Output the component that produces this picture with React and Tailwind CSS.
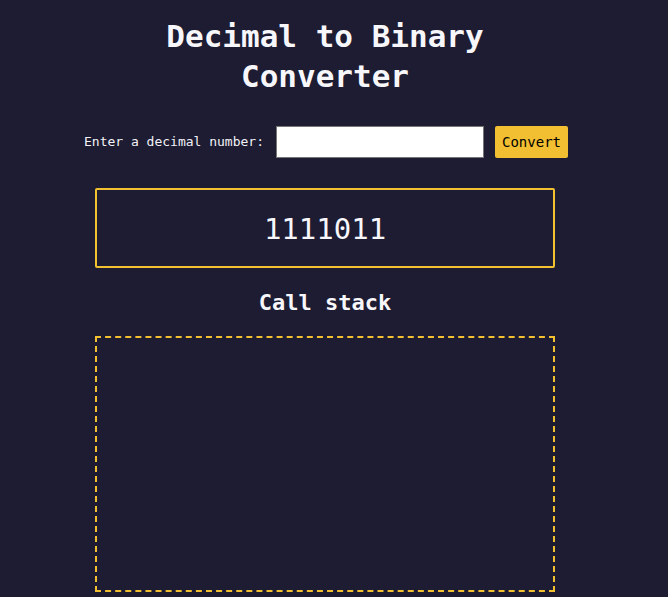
import React, { useState } from 'react';

const mono = { fontFamily: '"DejaVu Sans Mono", "Liberation Mono", monospace' };

const App = () => {
  const [value, setValue] = useState('');
  const [result, setResult] = useState('1111011');

  const convert = () => {
    const n = parseInt(value, 10);
    if (!isNaN(n)) setResult(n.toString(2));
  };

  return (
    <div className="min-h-[597px] w-full bg-[#1d1c32] text-white" style={mono}>
      <div className="w-[650px] flex flex-col items-center pt-4">
        {/* Title */}
        <h1 className="text-[31px] leading-[40px] font-bold text-center text-[#f7f7fb] w-[340px]">
          Decimal to Binary Converter
        </h1>

        {/* Form */}
        <div className="flex items-center mt-[30px] h-8 pl-[2px]">
          <label className="text-[13px] text-[#f2f2f6] mr-[12px]">Enter a decimal number:</label>
          <input
            type="number"
            value={value}
            onChange={(e) => setValue(e.target.value)}
            className="w-[208px] h-8 bg-white border border-[#767676] text-black px-1 outline-none"
          />
          <button
            onClick={convert}
            className="ml-[11px] h-8 w-[73px] bg-[#f1bf31] text-black text-[14px] rounded-[2px]"
          >
            Convert
          </button>
        </div>

        {/* Result */}
        <div className="mt-[30px] w-[460px] h-[80px] border-2 border-[#f3c02f] rounded-[2px] flex items-center justify-center pt-[4px]">
          <span className="text-[29px] text-[#f7f7fb]">{result}</span>
        </div>

        <h2 className="mt-[21px] text-[22px] leading-[28px] font-bold text-[#f7f7fb]">Call stack</h2>

        {/* Call stack area */}
        <div className="mt-[19px] w-[460px] h-[256px] border-2 border-dashed border-[#f3c02f]"></div>
      </div>
    </div>
  );
};

export default App;
